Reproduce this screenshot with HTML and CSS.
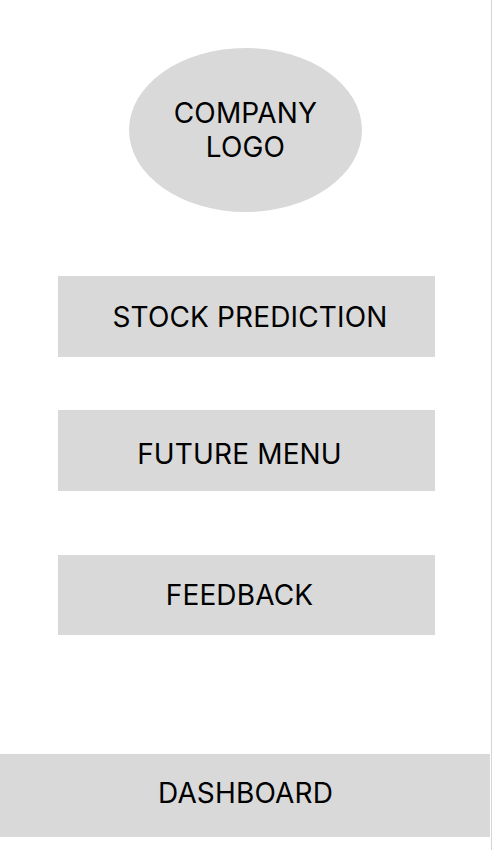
FILE: index.html
```html
<!DOCTYPE html>
<html>
<head>
<meta charset="utf-8">
<link rel="stylesheet" href="styles.css">
</head>
<body>
<div class="screen">
  <div class="logo">COMPANY<br>LOGO</div>
  <nav class="menu">
    <div class="btn btn-stock">STOCK PREDICTION</div>
    <div class="btn btn-future">FUTURE MENU</div>
    <div class="btn btn-feedback">FEEDBACK</div>
  </nav>
  <div class="dashboard">DASHBOARD</div>
</div>
</body>
</html>
```
FILE: styles.css
```css
html, body {
  margin: 0;
  padding: 0;
  background: #ffffff;
}
body {
  width: 492px;
  height: 850px;
  font-family: Inter, "Noto Sans", sans-serif;
  color: #000;
  font-size: 28px;
  letter-spacing: 0.15px;
}
.screen {
  width: 492px;
  height: 850px;
  box-sizing: border-box;
  border-right: 1px solid #d4d4d4;
  display: flex;
  flex-direction: column;
  align-items: flex-start;
}
.logo {
  margin-top: 48px;
  margin-left: 129px;
  width: 233px;
  height: 164px;
  border-radius: 50%;
  background: #d9d9d9;
  display: flex;
  align-items: center;
  justify-content: center;
  text-align: center;
  line-height: 34px;
}
.menu {
  margin-top: 64px;
  margin-left: 58px;
  display: flex;
  flex-direction: column;
  width: 377px;
}
.btn {
  height: 81px;
  box-sizing: border-box;
  background: #d9d9d9;
  display: flex;
  align-items: center;
  justify-content: center;
}
.btn-stock { padding-left: 7px; }
.btn-future { margin-top: 53px; padding-right: 14px; padding-top: 6px; }
.btn-feedback { margin-top: 64px; height: 80px; padding-right: 14px; }
.dashboard {
  margin-top: 119px;
  width: 490px;
  height: 83px;
  box-sizing: border-box;
  padding-bottom: 6px;
  padding-left: 1px;
  background: #d9d9d9;
  display: flex;
  align-items: center;
  justify-content: center;
}
```
